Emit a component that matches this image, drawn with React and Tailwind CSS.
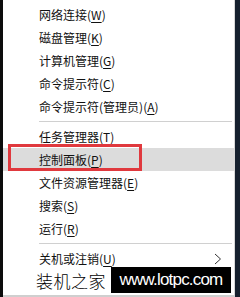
import React from 'react';

const CJK = { fontFamily: '"Noto Sans CJK SC", "Noto Sans", sans-serif' };

const GROUPS = [
  [
    { label: '网络连接', key: 'W' },
    { label: '磁盘管理', key: 'K' },
    { label: '计算机管理', key: 'G' },
    { label: '命令提示符', key: 'C' },
    { label: '命令提示符(管理员)', key: 'A' },
  ],
  [
    { label: '任务管理器', key: 'T' },
    { label: '控制面板', key: 'P', active: true },
    { label: '文件资源管理器', key: 'E' },
    { label: '搜索', key: 'S' },
    { label: '运行', key: 'R' },
  ],
  [{ label: '关机或注销', key: 'U', sub: true }],
];

function MenuItem({ item }) {
  return (
    <div
      className={`relative h-[23px] flex items-center pl-[36px] pr-[10px] text-[12px] text-[#111] ${
        item.active ? 'bg-[#dcdcdc]' : ''
      }`}
    >
      <span className="flex-1 leading-none">
        {item.label}(<u className="underline-offset-2">{item.key}</u>)
      </span>
      {item.sub && (
        <svg width="8" height="12" viewBox="0 0 8 12" className="mr-[2px]">
          <polyline points="1,1 6.5,6 1,11" fill="none" stroke="#333" strokeWidth="1" />
        </svg>
      )}
      {item.active && (
        <div className="absolute left-[5px] top-[-4px] w-[134px] h-[27px] border-[3px] border-[#e0393e]" />
      )}
    </div>
  );
}

export default function App() {
  return (
    <div className="w-[240px] h-[297px] flex bg-[#111]" style={CJK}>
      <div className="w-[3px] bg-[#0c0c0c]" />
      <div className="relative flex-1 bg-white pt-[3px] border-r border-[#d8d8d8] border-b-2 border-b-[#cfcfcf]">
        {GROUPS.map((group, gi) => (
          <div key={gi}>
            {gi > 0 && (
              <div className="h-[7px] flex items-center pl-[36px] pr-[2px]">
                <div className="h-px flex-1 bg-[#d0d0d0]" />
              </div>
            )}
            {group.map((item) => (
              <MenuItem key={item.label} item={item} />
            ))}
          </div>
        ))}

        {/* site watermark */}
        <div className="absolute left-[33px] top-[267px] flex items-center whitespace-nowrap">
          <span className="text-[17px] tracking-[0.5px] text-black font-light leading-none w-[75px]">
            装机之家
          </span>
          <span
            className="bg-black text-white h-[26px] w-[120px] flex items-center justify-center text-[17px] tracking-[-0.8px]"
            style={{ fontFamily: '"Liberation Sans", Arial, sans-serif' }}
          >
            www.lotpc.com
          </span>
        </div>
      </div>
      <div className="w-[5px] bg-[#16202e]" />
    </div>
  );
}
